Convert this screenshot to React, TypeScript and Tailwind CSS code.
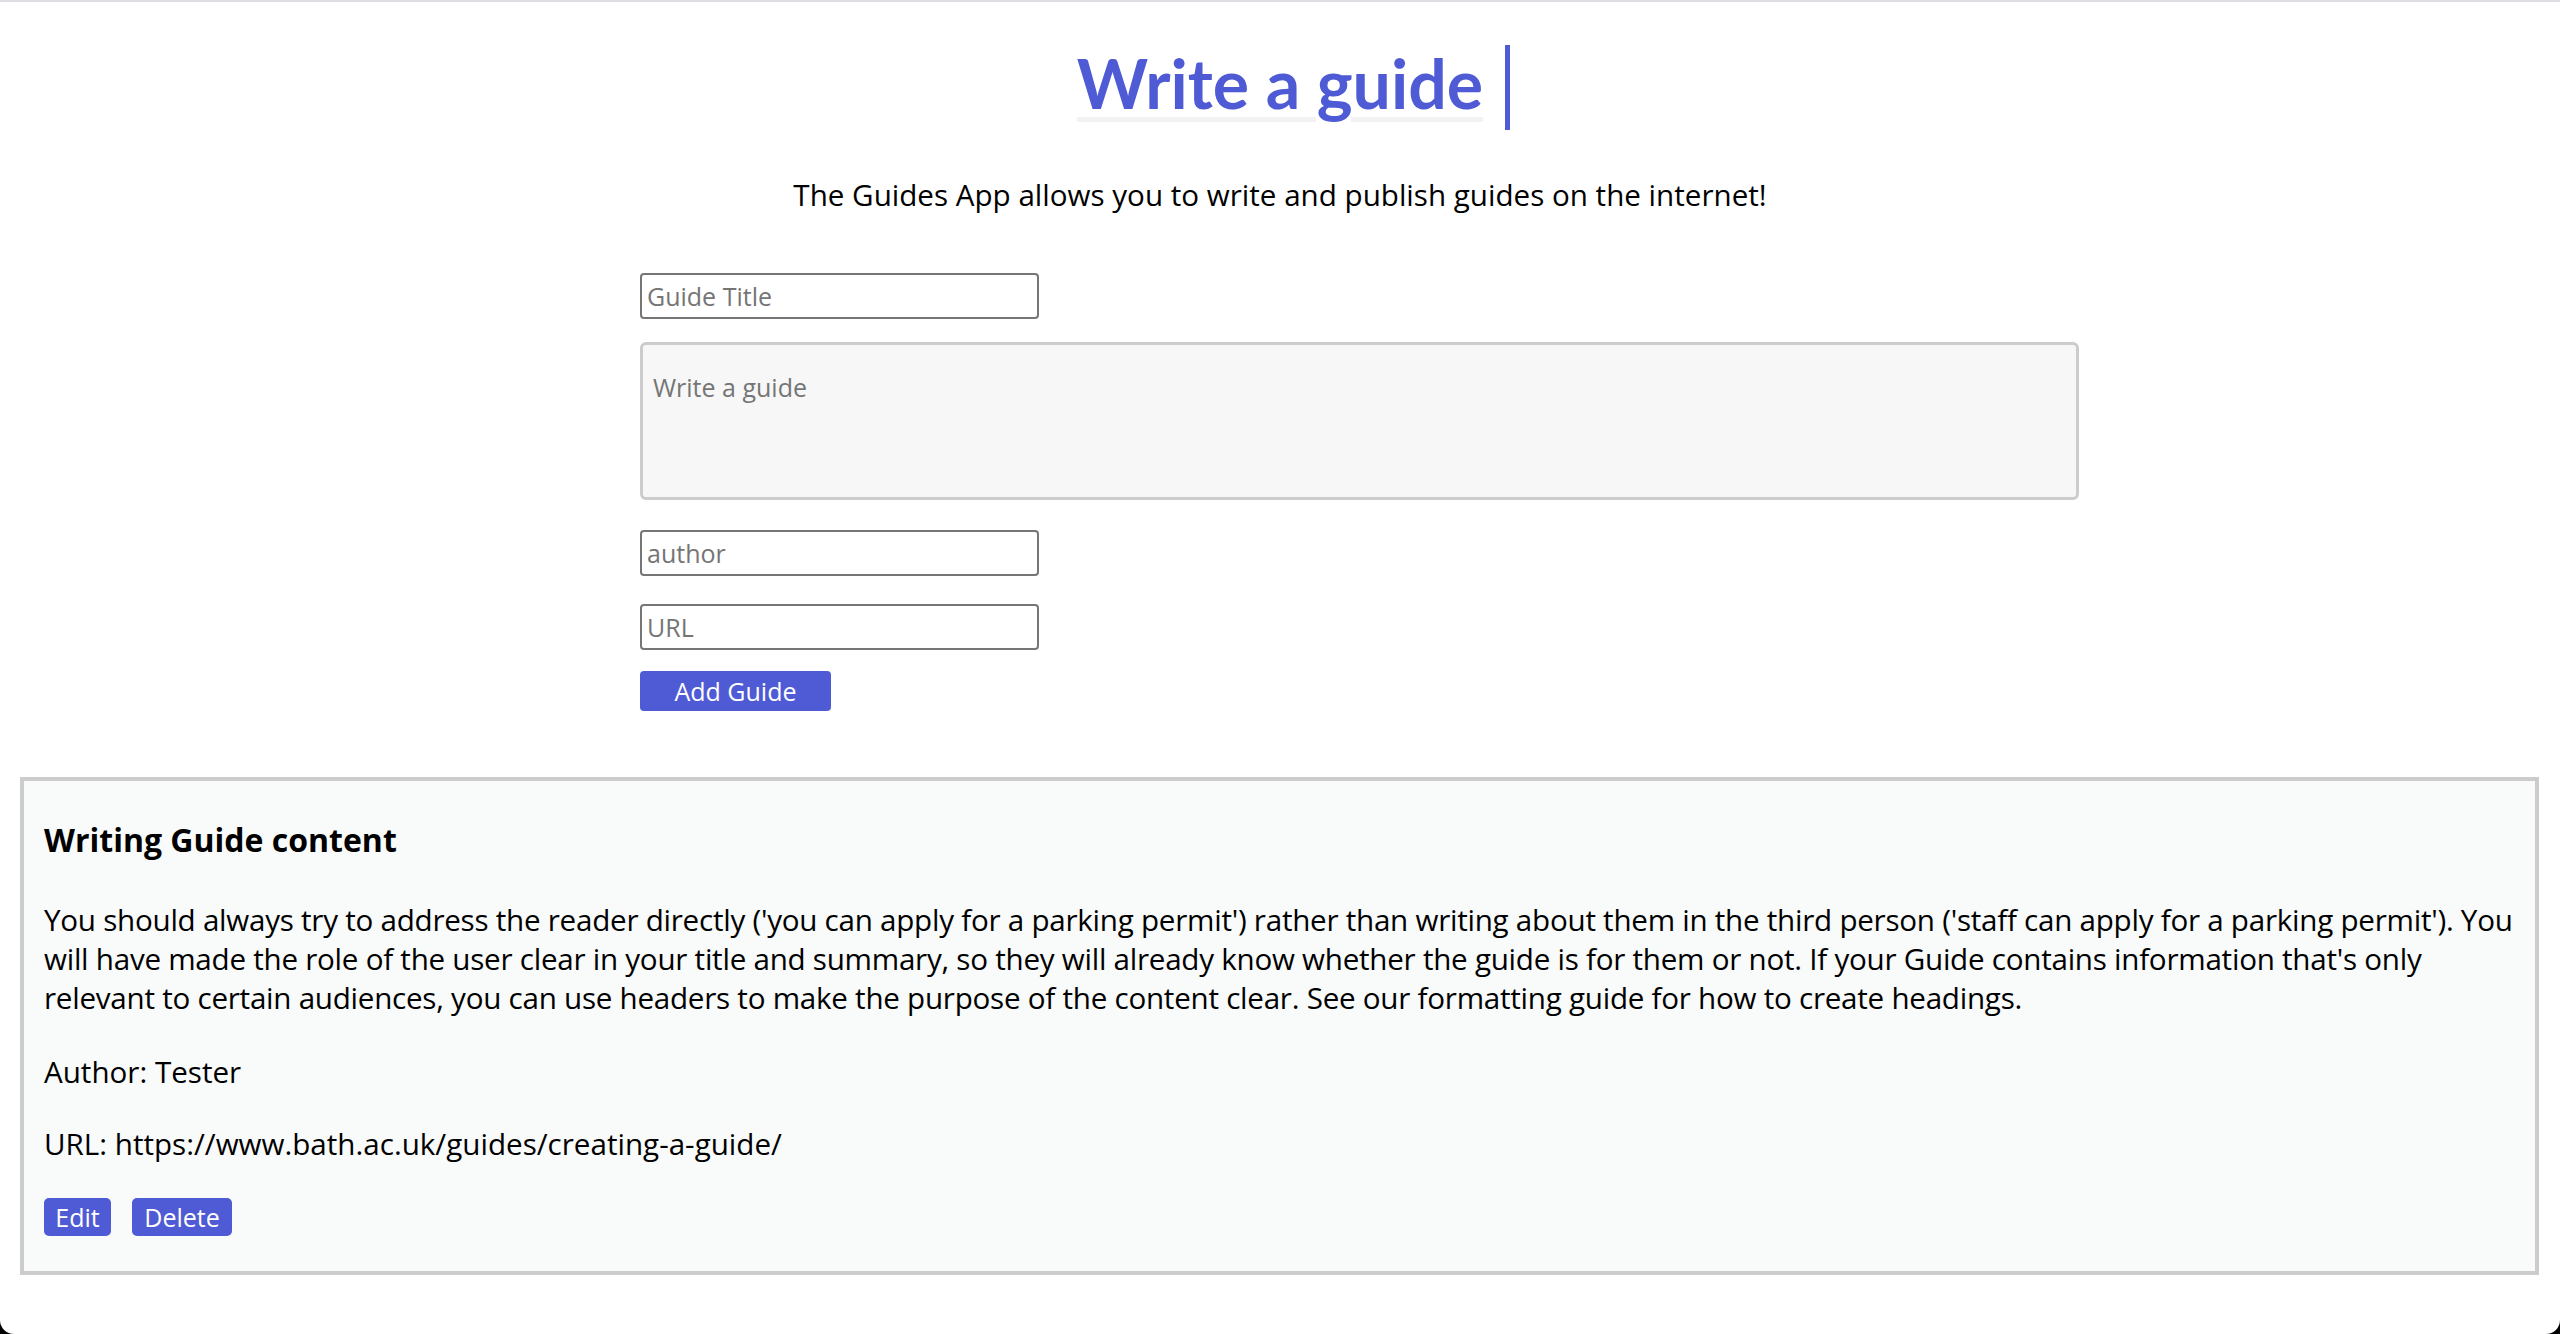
import { useState } from 'react';

const body = "font-['Open_Sans','Liberation_Sans',sans-serif]";

export default function App() {
  const [title, setTitle] = useState('');
  const [content, setContent] = useState('');
  const [author, setAuthor] = useState('');
  const [url, setUrl] = useState('');

  return (
    <div className="min-h-[1334px] bg-black">
      <div className={`flex h-[1334px] flex-col rounded-b-[14px] border-t-2 border-[#dedee2] bg-white text-black ${body}`}>
        {/* Heading */}
        <div className="flex justify-center pt-[37px]">
          <h1 className="relative font-['Lato',sans-serif] text-[68px] font-bold leading-[88px] text-[#4f5bd5] underline decoration-[#f2f2f2] decoration-[5px] underline-offset-[8px]">
            Write a guide
            <span className="absolute right-[-27px] top-[6px] h-[85px] w-[5px] bg-[#4f5bd5]" aria-hidden="true" />
          </h1>
        </div>

        <p className="mt-[50px] text-center text-[29.6px] leading-[36px]">
          The Guides App allows you to write and publish guides on the internet!
        </p>

        {/* Form */}
        <form className="ml-[640px] mt-[60px] flex flex-col items-start" onSubmit={(e) => e.preventDefault()}>
          <input
            value={title}
            onChange={(e) => setTitle(e.target.value)}
            placeholder="Guide Title"
            className="h-[46px] w-[399px] rounded-[4px] border-2 border-[#767676] bg-white px-[5px] text-[25px] placeholder:text-[#757575] focus:outline-none"
          />
          <textarea
            value={content}
            onChange={(e) => setContent(e.target.value)}
            placeholder="Write a guide"
            className="mt-[23px] h-[158px] w-[1439px] resize-none rounded-[6px] border-[3px] border-[#cccccc] bg-[#f7f7f7] px-[10px] pt-[26px] text-[25px] leading-[32px] placeholder:text-[#757575] focus:outline-none"
          />
          <input
            value={author}
            onChange={(e) => setAuthor(e.target.value)}
            placeholder="author"
            className="mt-[30px] h-[46px] w-[399px] rounded-[4px] border-2 border-[#767676] bg-white px-[5px] text-[25px] placeholder:text-[#757575] focus:outline-none"
          />
          <input
            value={url}
            onChange={(e) => setUrl(e.target.value)}
            placeholder="URL"
            className="mt-[28px] h-[46px] w-[399px] rounded-[4px] border-2 border-[#767676] bg-white px-[5px] text-[25px] placeholder:text-[#757575] focus:outline-none"
          />
          <button
            type="submit"
            className="mt-[21px] h-[40px] w-[191px] rounded-[4px] bg-[#4f5bd5] text-[25px] leading-none text-white"
          >
            Add Guide
          </button>
        </form>

        {/* Guide card */}
        <div className="ml-[20px] mr-[21px] mt-[66px] border-4 border-[#cccccc] bg-[#f9fafa] pb-[35px] pl-[20px] pr-[6px] pt-[39px]">
          <h3 className="text-[32px] font-bold leading-[40px]">Writing Guide content</h3>
          <p className="mt-[40px] text-[29.6px] leading-[39px] tracking-[-0.25px]">
            You should always try to address the reader directly ('you can apply for a parking permit') rather than
            writing about them in the third person ('staff can apply for a parking permit'). You will have made the role
            of the user clear in your title and summary, so they will already know whether the guide is for them or not.
            If your Guide contains information that's only relevant to certain audiences, you can use headers to make
            the purpose of the content clear. See our formatting guide for how to create headings.
          </p>
          <p className="mt-[35px] text-[29.6px] leading-[39px]">Author: Tester</p>
          <p className="mt-[33px] text-[29.6px] leading-[39px]">URL: https://www.bath.ac.uk/guides/creating-a-guide/</p>
          <div className="mt-[35px] flex gap-[21px]">
            <button type="button" className="h-[38px] w-[67px] rounded-[5px] bg-[#4f5bd5] text-[25px] leading-none text-white">
              Edit
            </button>
            <button type="button" className="h-[38px] w-[100px] rounded-[5px] bg-[#4f5bd5] text-[25px] leading-none text-white">
              Delete
            </button>
          </div>
        </div>
      </div>
    </div>
  );
}
